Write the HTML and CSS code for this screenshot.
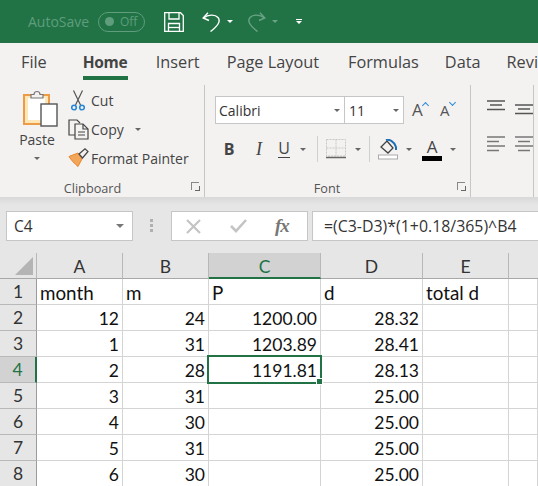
FILE: index.html
```html
<!DOCTYPE html>
<html lang="en">
<head>
    <meta charset="UTF-8">
    <title>Book1 - Excel</title>
    <link rel="stylesheet" href="styles.css">
</head>
<body>
    <div class="titlebar">
        <span class="autosave">AutoSave</span>
        <span class="toggle"><i class="knob"></i>Off</span>
        <svg class="qa-save" width="20" height="20" viewBox="0 0 20 20" fill="none" stroke="#fff" stroke-width="1.3">
            <path d="M.7.7H16.5L19.3 3.5V19.3H.7Z"/><path d="M5 .7V7H15V.7"/><path d="M4.5 19.3V11.5H15.5V19.3"/><path d="M5 15.5H15"/>
        </svg>
        <svg class="qa-undo" width="19" height="20" viewBox="0 0 19 20" fill="none" stroke="#fff" stroke-width="1.4">
            <path d="M6 .8L1.2 6 7 8.5"/><path d="M1.5 6C6 2.5 13 2 16 5.5C19 9 16 14 8.5 19.5"/>
        </svg>
        <i class="caret white qa-c1"></i>
        <svg class="qa-redo" width="19" height="20" viewBox="0 0 19 20" fill="none" stroke="#6aa385" stroke-width="1.4">
            <path d="M13 .8L17.8 6 12 8.5"/><path d="M17.5 6C13 2.5 6 2 3 5.5C0 9 3 14 10.5 19.5"/>
        </svg>
        <i class="caret dim qa-c2"></i>
        <span class="qa-more"><b></b><i class="caret white small"></i></span>
    </div>

    <nav class="tabs">
        <a class="tab t-file">File</a>
        <a class="tab t-home active">Home</a>
        <a class="tab t-insert">Insert</a>
        <a class="tab t-layout">Page Layout</a>
        <a class="tab t-formulas">Formulas</a>
        <a class="tab t-data">Data</a>
        <a class="tab t-review">Revi</a>
    </nav>

    <div class="ribbon">
        <section class="group clipboard">
            <div class="group-body clip-body">
                <div class="paste">
                    <svg width="35" height="38" viewBox="0 0 35 38">
                        <rect x="1" y="5" width="25" height="29" fill="#fde6b8" stroke="#ed9b47" stroke-width="2"/>
                        <rect x="5" y="8" width="17" height="22" fill="#fff"/>
                        <path d="M8 8V4.500H11C11 .5 17 .5 17 4.500H20V8Z" fill="#f3f2f1" stroke="#777" stroke-width="1.200"/>
                        <rect x="18" y="14" width="16" height="22" fill="#fff" stroke="#555" stroke-width="1.400"/>
                    </svg>
                    <span>Paste</span>
                    <i class="caret"></i>
                </div>
                <div class="clip-tools">
                    <div class="tool">
                        <svg class="ic-cut" width="14" height="21" viewBox="0 0 14 21" fill="none">
                            <path d="M9.500 15L2.500 .5M4.500 15L11.500 .5" stroke="#555" stroke-width="1.200"/>
                            <circle cx="3" cy="17.500" r="2.300" stroke="#2b88d8" stroke-width="1.600"/>
                            <circle cx="11" cy="17.500" r="2.300" stroke="#2b88d8" stroke-width="1.600"/>
                        </svg>
                        <span>Cut</span>
                    </div>
                    <div class="tool">
                        <svg class="ic-copy" width="21" height="21" viewBox="0 0 21 21" fill="none" stroke="#444" stroke-width="1.200">
                            <path d="M7 16H1V1H9L12 4"/>
                            <path d="M7 5H15L20 10V20H7Z" fill="#f3f2f1"/>
                            <path d="M15 5V10H20M10 13H17M10 16H17"/>
                        </svg>
                        <span>Copy</span>
                        <i class="caret copy-caret"></i>
                    </div>
                    <div class="tool">
                        <svg class="ic-brush" width="21" height="19" viewBox="0 0 21 19" fill="none">
                            <path d="M1 8.500L10 5 14 11 10 18.500C7 16 3 12 1 8.500Z" fill="#f2a65a" stroke="#e8862e"/>
                            <path d="M11 6L17 .8 20 3.500 14.500 10Z" fill="#f3f2f1" stroke="#444" stroke-width="1.200"/>
                        </svg>
                        <span>Format Painter</span>
                    </div>
                </div>
            </div>
            <footer class="group-label">Clipboard<i class="launcher"></i></footer>
        </section>

        <section class="group font">
            <div class="group-body font-body">
                <div class="font-row">
                    <div class="combo combo-name"><span>Calibri</span><i class="caret"></i></div>
                    <div class="combo combo-size"><span>11</span><i class="caret"></i></div>
                    <span class="grow">A<em class="up"></em></span>
                    <span class="grow shrink">A<em class="down"></em></span>
                </div>
                <div class="font-row row-format">
                    <b class="fmt fmt-b">B</b>
                    <span class="fmt fmt-i">I</span>
                    <span class="fmt fmt-u">U</span>
                    <i class="caret c-u"></i>
                    <i class="vsep s-1"></i>
                    <svg class="ic-border" width="20" height="20" viewBox="0 0 20 20" fill="none">
                        <path d="M.5.5H19.500V17H.5ZM10 .5V17M.5 9H19.500" stroke="#c8c8c8" stroke-dasharray="2 1"/>
                        <path d="M0 18.500H20" stroke="#666" stroke-width="1.500"/>
                    </svg>
                    <i class="caret c-b"></i>
                    <i class="vsep s-2"></i>
                    <svg class="ic-fill" width="20" height="21" viewBox="0 0 20 21" fill="none">
                        <path d="M3 8L9 2 15 9 10 14Z" stroke="#444" stroke-width="1.300"/>
                        <path d="M8 1C11 0 16 2 18 8V11" stroke="#1e6fb5" stroke-width="2"/>
                        <rect x=".5" y="16" width="19" height="4" fill="#fff" stroke="#aaa"/>
                    </svg>
                    <i class="caret c-f"></i>
                    <span class="text-color">A</span>
                    <i class="caret c-t"></i>
                </div>
            </div>
            <footer class="group-label">Font<i class="launcher"></i></footer>
        </section>

        <section class="group align">
            <div class="align-row">
                <svg width="18" height="11" viewBox="0 0 18 11" stroke="#555" stroke-width="1.500"><path d="M0 1H18M3 5H15M0 9.500H18"/></svg>
                <svg class="down-1" width="18" height="11" viewBox="0 0 18 11" stroke="#555" stroke-width="1.500"><path d="M0 1H18M3 5H15M0 9.500H18"/></svg>
            </div>
            <div class="align-row row-2">
                <svg width="18" height="16" viewBox="0 0 18 16" stroke="#777" stroke-width="1.500"><path d="M0 1H18M0 5.500H12M0 10H18M0 14.500H12"/></svg>
                <svg width="18" height="16" viewBox="0 0 18 16" stroke="#777" stroke-width="1.500"><path d="M0 1H18M3 5.500H15M0 10H18M3 14.500H15"/></svg>
            </div>
        </section>
    </div>
    <div class="ribbon-shadow"></div>

    <div class="formula-bar">
        <div class="name-box"><span>C4</span><i class="caret"></i></div>
        <div class="grip"></div>
        <div class="fx-buttons">
            <svg width="15" height="15" viewBox="0 0 15 15" stroke="#c4c4c4" stroke-width="2.200" fill="none"><path d="M1 1L14 14M14 1L1 14"/></svg>
            <svg width="17" height="14" viewBox="0 0 17 14" stroke="#c4c4c4" stroke-width="2.600" fill="none"><path d="M1 7L6 12 16 1"/></svg>
            <span class="fx">fx</span>
        </div>
        <div class="formula">=(C3-D3)*(1+0.18/365)^B4</div>
    </div>

    <div class="sheet">
        <div class="hd corner"><i class="corner-mark"></i></div>
        <div class="hd">A</div>
        <div class="hd">B</div>
        <div class="hd sel-col">C</div>
        <div class="hd">D</div>
        <div class="hd">E</div>
        <div class="hd last"></div>

        <div class="rh">1</div><div class="c t">month</div><div class="c t">m</div><div class="c t">P</div><div class="c t">d</div><div class="c t">total d</div><div class="c"></div>
        <div class="rh">2</div><div class="c n">12</div><div class="c n">24</div><div class="c n">1200.00</div><div class="c n">28.32</div><div class="c"></div><div class="c"></div>
        <div class="rh">3</div><div class="c n">1</div><div class="c n">31</div><div class="c n">1203.89</div><div class="c n">28.41</div><div class="c"></div><div class="c"></div>
        <div class="rh sel-row">4</div><div class="c n">2</div><div class="c n">28</div><div class="c n active-cell">1191.81<i class="handle"></i></div><div class="c n">28.13</div><div class="c"></div><div class="c"></div>
        <div class="rh">5</div><div class="c n">3</div><div class="c n">31</div><div class="c"></div><div class="c n">25.00</div><div class="c"></div><div class="c"></div>
        <div class="rh">6</div><div class="c n">4</div><div class="c n">30</div><div class="c"></div><div class="c n">25.00</div><div class="c"></div><div class="c"></div>
        <div class="rh">7</div><div class="c n">5</div><div class="c n">31</div><div class="c"></div><div class="c n">25.00</div><div class="c"></div><div class="c"></div>
        <div class="rh">8</div><div class="c n">6</div><div class="c n">30</div><div class="c"></div><div class="c n">25.00</div><div class="c"></div><div class="c"></div>
    </div>
</body>
</html>
```

FILE: styles.css
```css
html, body {
    height: 486px;
    overflow: hidden;
}
body {
    margin: 0;
    padding: 0;
    background-color: #e6e6e6;
    font-family: "Open Sans", Arial, sans-serif;
    color: #444;
}
i, em {
    display: block;
    font-style: normal;
}

/* little dropdown triangle used all over the ribbon */
.caret {
    width: 0;
    height: 0;
    border-left: 3.5px solid transparent;
    border-right: 3.5px solid transparent;
    border-top: 3.5px solid #666;
    flex: none;
}
.caret.white { border-top-color: #fff; }
.caret.dim { border-top-color: #6aa385; }

/* title bar */
.titlebar {
    height: 43px;
    background-color: #217346;
    display: flex;
    align-items: center;
}
.autosave {
    margin-left: 28px;
    font-size: 14px;
    color: #5f9d7c;
    width: 70px;
}
.toggle {
    box-sizing: border-box;
    width: 47px;
    height: 20px;
    border: 1px solid #5f9d7c;
    border-radius: 10px;
    color: #5f9d7c;
    font-size: 12px;
    display: flex;
    align-items: center;
    padding-left: 6px;
    gap: 6px;
}
.knob {
    width: 9px;
    height: 9px;
    border-radius: 50%;
    background-color: #5f9d7c;
}
.qa-save { margin-left: 19px; }
.qa-undo { margin-left: 18px; }
.qa-c1 { margin-left: 6px; }
.qa-redo { margin-left: 14px; }
.qa-c2 { margin-left: 6px; }
.qa-more {
    margin-left: 18px;
    display: flex;
    flex-direction: column;
    gap: 1px;
}
.qa-more b {
    width: 6px;
    height: 1px;
    background-color: #fff;
}
.qa-more .caret {
    border-left-width: 3px;
    border-right-width: 3px;
}

/* tabs */
.tabs {
    height: 37px;
    background-color: #f3f2f1;
    display: flex;
    white-space: nowrap;
    overflow: hidden;
}
.tab {
    font-size: 16.3px;
    line-height: 38px;
    color: #444;
    height: 37px;
    box-sizing: border-box;
}
.t-file { margin-left: 21px; }
.t-home { margin-left: 36px; width: 48px; }
.t-insert { margin-left: 28px; }
.t-layout { margin-left: 27px; }
.t-formulas { margin-left: 29px; }
.t-data { margin-left: 26px; }
.t-review { margin-left: 26px; }
.tab.active {
    font-size: 15.5px;
    font-weight: 700;
    border-bottom: 4px solid #217346;
    letter-spacing: -0.3px;
}

/* ribbon */
.ribbon {
    height: 117px;
    background-color: #f3f2f1;
    display: flex;
    overflow: hidden;
}
.ribbon-shadow {
    height: 8px;
    background: linear-gradient(#d8d8d8, #e6e6e6);
}
.group {
    box-sizing: border-box;
    height: 113px;
    margin-top: 5px;
    border-right: 1px solid #c6c6c6;
    display: flex;
    flex-direction: column;
    flex: none;
}
.group-body { flex: 1; }
.group-label {
    height: 20px;
    font-size: 12.7px;
    line-height: 20px;
    color: #555;
    text-align: center;
    position: relative;
}
.launcher {
    position: absolute;
    right: 5px;
    top: 4px;
    width: 7px;
    height: 7px;
    border-left: 1px solid #888;
    border-top: 1px solid #888;
}
.launcher::after {
    content: "";
    position: absolute;
    right: -1px;
    bottom: -1px;
    width: 4px;
    height: 4px;
    border-right: 1px solid #666;
    border-bottom: 1px solid #666;
}

.clipboard { width: 205px; }
.clip-body { display: flex; }
.clipboard .group-label { padding-right: 19px; }
.paste {
    width: 68px;
    padding-top: 5px;
    display: flex;
    flex-direction: column;
    align-items: center;
    font-size: 14px;
    color: #444;
}
.paste svg { margin-left: 12px; margin-right: 0; }
.paste span { margin-top: 2px; margin-left: 6px; line-height: 20px; }
.paste .caret { margin-top: 7px; margin-left: 6px; }
.clip-tools {
    display: flex;
    flex-direction: column;
    padding-top: 1px;
}
.tool {
    height: 29px;
    display: flex;
    align-items: center;
    font-size: 14px;
    color: #444;
    position: relative;
    padding-left: 23px;
    white-space: nowrap;
}
.tool svg { position: absolute; left: 0; top: 4px; }
.tool .ic-cut { left: 3px; top: 4px; }
.copy-caret { margin-left: 11px; }

.font { width: 266px; }
.font .group-label { padding-right: 21px; }
.font-row {
    display: flex;
    align-items: center;
    position: relative;
}
.font-body { padding-top: 11px; padding-left: 10px; }
.combo {
    box-sizing: border-box;
    height: 28px;
    background-color: #fff;
    border: 1px solid #c6c6c6;
    display: flex;
    align-items: center;
    justify-content: space-between;
    padding: 0 4px 0 3px;
    font-size: 14px;
    color: #333;
}
.combo-name { width: 130px; }
.combo-size { width: 60px; margin-right: 8px; margin-left: -1px; padding-left: 4px; }
.grow {
    width: 28px;
    font-size: 17px;
    position: relative;
    padding-left: 0;
    line-height: 24px;
    color: #555;
}
.grow.shrink { font-size: 15px; }
.grow em {
    position: absolute;
    left: 11px;
    top: 5px;
    width: 4px;
    height: 4px;
    border-left: 1.5px solid #2b88d8;
    border-top: 1.5px solid #2b88d8;
    transform: rotate(45deg);
}
.grow em.down {
    transform: rotate(225deg);
    left: 10px;
    top: 2px;
}
.row-format {
    margin-top: 12px;
    height: 26px;
}
.fmt { font-size: 16px; color: #444; width: 12px; text-align: center; }
.fmt-b { margin-left: 8px; }
.fmt-i {
    margin-left: 18px;
    font-family: "Liberation Serif", serif;
    font-style: italic;
    font-size: 18px;
}
.fmt-u {
    margin-left: 13px;
    border-bottom: 1px solid #444;
    line-height: 17px;
}
.c-u { margin-left: 10px; }
.vsep {
    width: 1px;
    height: 26px;
    background-color: #d0d0d0;
}
.s-1 { margin-left: 11px; }
.ic-border { margin-left: 8px; }
.c-b { margin-left: 9px; }
.s-2 { margin-left: 8px; }
.ic-fill { margin-left: 8px; }
.c-f { margin-left: 8px; }
.text-color {
    margin-left: 10px;
    width: 20px;
    box-sizing: border-box;
    text-align: center;
    font-size: 17px;
    line-height: 18px;
    border-bottom: 5px solid #000;
}
.c-t { margin-left: 8px; }

.align { padding: 15px 0 0 16px; }
.align-row { display: flex; gap: 10px; }
.down-1 { margin-top: 4px; }
.row-2 { margin-top: 21px; }

/* formula bar */
.formula-bar {
    height: 30px;
    margin-top: 6px;
    display: flex;
}
.name-box {
    box-sizing: border-box;
    width: 127px;
    margin-left: 6px;
    background-color: #fff;
    border: 1px solid #c6c6c6;
    display: flex;
    align-items: center;
    justify-content: space-between;
    padding: 0 8px 0 7px;
    font-size: 15.5px;
    color: #333;
}
.name-box .caret {
    border-left-width: 4px;
    border-right-width: 4px;
    border-top-width: 4px;
    border-top-color: #777;
}
.grip {
    width: 3px;
    height: 13px;
    margin: 8px 18px 0 17px;
    background: repeating-linear-gradient(#b0b0b0 0 3px, transparent 3px 5px);
}
.fx-buttons {
    box-sizing: border-box;
    width: 137px;
    background-color: #fff;
    border: 1px solid #c6c6c6;
    display: flex;
    align-items: center;
    padding-left: 14px;
}
.fx-buttons svg + svg { margin-left: 29px; }
.fx {
    margin-left: 28px;
    font-family: "Liberation Serif", serif;
    font-style: italic;
    font-weight: 700;
    font-size: 19px;
    color: #777;
    letter-spacing: -1px;
}
.formula {
    box-sizing: border-box;
    flex: 1;
    margin-left: 4px;
    background-color: #fff;
    border: 1px solid #c6c6c6;
    border-right: 0;
    padding-left: 11px;
    font-size: 15.9px;
    line-height: 28px;
    color: #333;
    white-space: nowrap;
}

/* sheet */
.sheet {
    margin-top: 12px;
    display: grid;
    grid-template-columns: 37px 86px 86px 112px 102px 86px 29px;
    grid-template-rows: 26px repeat(8, 26px);
    background-color: #fff;
    font-family: Lato, "Liberation Sans", sans-serif;
    font-size: 17.5px;
    color: #111;
}
.hd {
    box-sizing: border-box;
    background-color: #e6e6e6;
    border-right: 1px solid #b8b8b8;
    border-bottom: 1px solid #a8a8a8;
    text-align: center;
    line-height: 27px;
    color: #333;
}
.hd.last { border-right: 0; }
.corner { position: relative; }
.corner-mark {
    position: absolute;
    left: 15px;
    top: 4px;
    width: 0;
    height: 0;
    border-left: 18px solid transparent;
    border-bottom: 18px solid #b4b4b4;
}
.sel-col {
    background-color: #d2d2d2;
    border-bottom: 2px solid #217346;
    color: #217346;
}
.rh {
    box-sizing: border-box;
    background-color: #e6e6e6;
    border-right: 1px solid #9c9c9c;
    border-bottom: 1px solid #b8b8b8;
    text-align: center;
    line-height: 26px;
    color: #333;
}
.sel-row {
    background-color: #d2d2d2;
    border-right: 2px solid #217346;
    color: #217346;
}
.c {
    box-sizing: border-box;
    border-right: 1px solid #d4d4d4;
    border-bottom: 1px solid #d4d4d4;
    padding: 0 3px;
    line-height: 28px;
    white-space: nowrap;
}
.t { font-size: 18.8px; }
.n { text-align: right; }
.active-cell { position: relative; }
.active-cell::before {
    content: "";
    position: absolute;
    left: -2px;
    top: -2px;
    right: -2px;
    bottom: -2px;
    border: 2px solid #217346;
}
.handle {
    position: absolute;
    right: -3px;
    bottom: -3px;
    width: 5px;
    height: 5px;
    background-color: #217346;
    border: 1px solid #fff;
}
```
